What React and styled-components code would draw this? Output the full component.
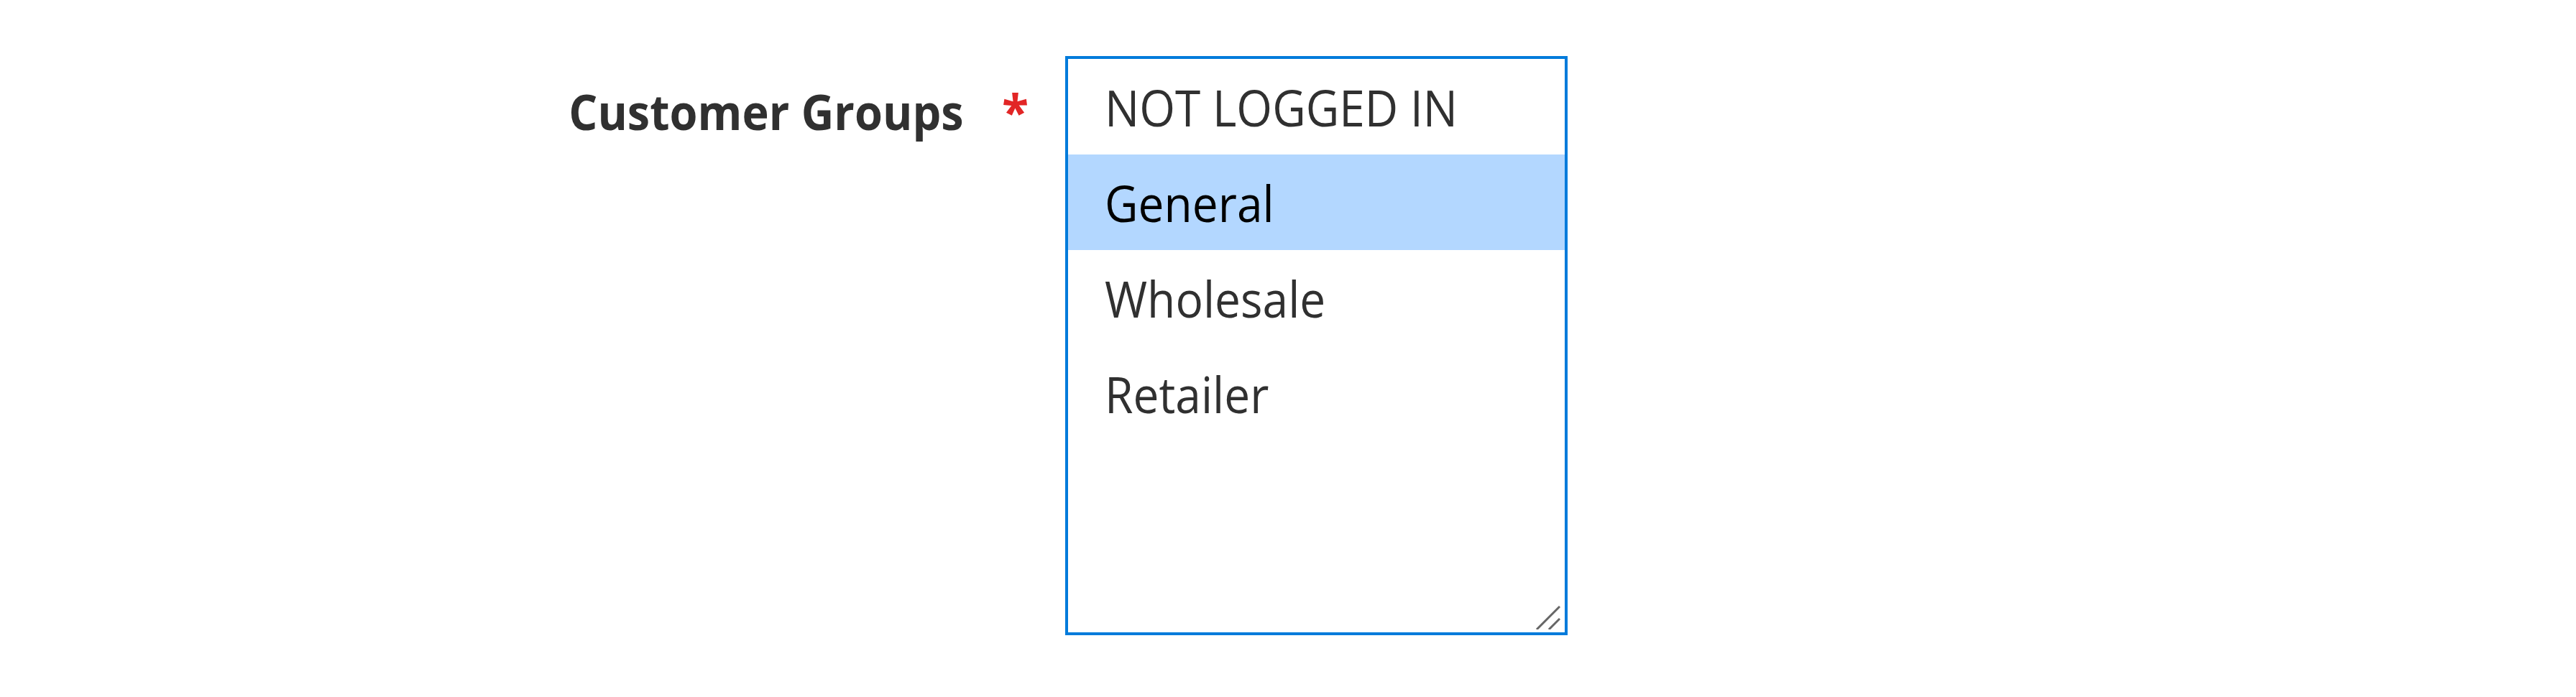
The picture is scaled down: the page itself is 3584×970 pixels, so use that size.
import React from "react";
import styled, { createGlobalStyle } from "styled-components";

const OPTIONS = ["NOT LOGGED IN", "General", "Wholesale", "Retailer"];

const GlobalStyle = createGlobalStyle`
  html, body {
    margin: 0;
    padding: 0;
    background: #ffffff;
  }
  body {
    font-family: "Open Sans", "Noto Sans", sans-serif;
    color: #303030;
  }
`;

const Field = styled.div`
  display: flex;
  align-items: flex-start;
  padding-top: 78px;
`;

const LabelCell = styled.label`
  box-sizing: border-box;
  width: 1482px;
  padding: 37px 51px 0 0;
  text-align: right;
  font-size: 68px;
  line-height: 80px;
  font-weight: 700;
  color: #303030;
  white-space: nowrap;
`;

/* the source text is a touch narrower than Open Sans */
const Narrow = styled.span`
  display: inline-block;
  transform: scaleX(${(p) => p.$x});
  transform-origin: ${(p) => p.$origin || "left"} center;
`;

const Required = styled.span`
  margin-left: 53px;
  color: #e22626;
  font-weight: 700;
`;

const MultiSelect = styled.div`
  position: relative;
  box-sizing: border-box;
  width: 699px;
  height: 806px;
  border: 4px solid #007bdb;
  background: #ffffff;
  overflow: hidden;
`;

const Option = styled.div`
  height: 133px;
  display: flex;
  align-items: center;
  padding-left: 51px;
  font-size: 69px;
  white-space: nowrap;
  color: ${(p) => (p.$selected ? "#000000" : "#303030")};
  background: ${(p) => (p.$selected ? "#b3d7ff" : "transparent")};
`;

const Grip = styled.svg`
  position: absolute;
  right: 6px;
  bottom: 4px;
  width: 34px;
  height: 34px;
`;

export default function App() {
  return (
    <>
      <GlobalStyle />
      <Field>
        <LabelCell>
          <Narrow $x={0.927} $origin="right">
            Customer Groups
          </Narrow>
          <Required>*</Required>
        </LabelCell>
        <MultiSelect>
          {OPTIONS.map((o) => (
            <Option key={o} $selected={o === "General"}>
              <Narrow $x={0.928}>{o}</Narrow>
            </Option>
          ))}
          <Grip viewBox="0 0 34 34">
            <path
              d="M2 33 L32 3 M19 33 L32 20"
              stroke="#666666"
              strokeWidth="3"
              strokeLinecap="square"
              fill="none"
            />
          </Grip>
        </MultiSelect>
      </Field>
    </>
  );
}
